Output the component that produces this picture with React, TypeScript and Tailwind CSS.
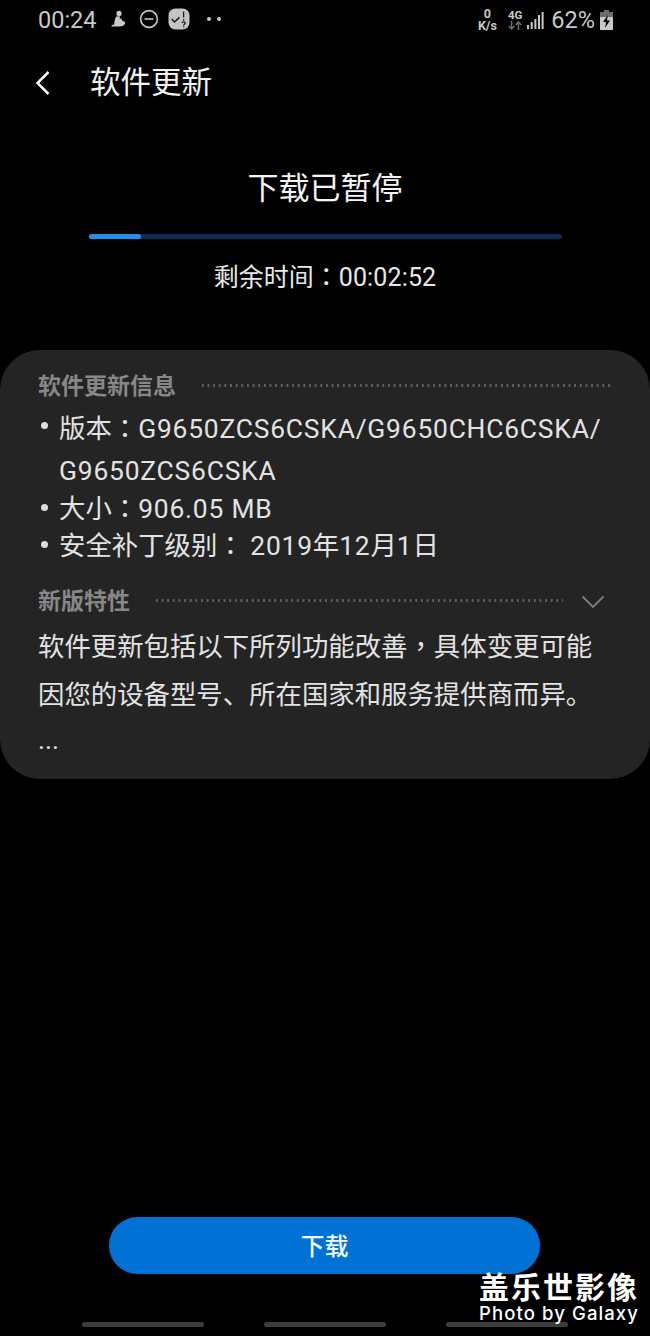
import React from 'react';

const fontStack = "font-['Roboto','Noto_Sans_CJK_SC',sans-serif]";

// Full-width colon and comma sit centred in their cell on this system font
const Mark: React.FC<{ children: React.ReactNode }> = ({ children }) => (
    <span className="font-['Noto_Sans_CJK_TC',sans-serif]">{children}</span>
);

// Latin runs in the info list are set a little wider than the CJK around them
const Latin: React.FC<{ children: React.ReactNode }> = ({ children }) => (
    <span className="tracking-[0.8px]">{children}</span>
);

const SectionTitle: React.FC<{ label: string; chevron?: boolean }> = ({ label, chevron }) => (
    <div className="flex items-center h-[30px]">
        <span className="text-[23px] leading-[30px] font-bold text-[#878787] whitespace-nowrap">{label}</span>
        <div className="ml-[24px] -mt-[3px] flex-1 h-[3px] bg-[radial-gradient(circle,#606060_1.1px,transparent_1.3px)] bg-[length:5.65px_3px]" />
        {chevron && (
            <svg className="ml-[18px] mr-[5px]" width="24" height="14" viewBox="0 0 24 14" fill="none" stroke="#7d7d7d" strokeWidth="1.9">
                <path d="M1.5 1.5 L12 12 L22.5 1.5" />
            </svg>
        )}
    </div>
);

const Bullet: React.FC<{ children: React.ReactNode; lineClass: string }> = ({ children, lineClass }) => (
    <div className={`flex text-[26.4px] text-[#e3e3e3] whitespace-nowrap ${lineClass}`}>
        <span className="w-[7px] h-[7px] rounded-full bg-[#dedede] mt-[16px] ml-[3px] mr-[11px] shrink-0" />
        <div>{children}</div>
    </div>
);

const StatusBar: React.FC = () => (
    <div className="flex items-center justify-between h-[40px] pl-[38px] pr-[37px] text-[#c9c9c9]">
        <div className="flex items-center">
            <span className="text-[23.5px] leading-[40px]">00:24</span>
            <svg className="ml-[13px] -mt-[3px]" width="18" height="18" viewBox="0 0 18 18" fill="#c9c9c9">
                <circle cx="9" cy="3.4" r="2.6" />
                <path d="M6.2 6.4 L10 6.2 L9.6 8.4 C11.4 8.6 12.4 9.6 12.6 11 L15.4 12 L15 13.2 C14.4 15.6 12.4 16.4 9.6 16.4 L1.6 16.4 L1.6 15.2 L4.4 14.2 C4 11.6 5 8.8 6.2 6.4 Z" />
            </svg>
            <svg className="ml-[11px] -mt-[3px]" width="20" height="20" viewBox="0 0 20 20" fill="none" stroke="#c9c9c9" strokeWidth="1.6">
                <circle cx="10" cy="10" r="8.4" />
                <path d="M5.6 10 H14.4" />
            </svg>
            <svg className="ml-[9px] -mt-[3px]" width="22" height="22" viewBox="0 0 22 22">
                <rect x="0.5" y="0.5" width="21" height="21" rx="7" fill="#c4c4c4" />
                <path d="M3.6 11 L6.6 14 L11.4 9.4" fill="none" stroke="#1c1c1c" strokeWidth="1.6" />
                <path d="M15.6 3.6 V9.4 M15.6 11 V12.4 M14 15 C14.4 13.6 17.2 13.6 17.2 15.2 C17.2 16.2 15.6 16.2 15.6 17.4 M15.6 18.2 V19.2" fill="none" stroke="#1c1c1c" strokeWidth="1.3" />
            </svg>
            <span className="ml-[17px] -mt-[3px] w-[4px] h-[4px] rounded-full bg-[#c9c9c9]" />
            <span className="ml-[6px] -mt-[3px] w-[4px] h-[4px] rounded-full bg-[#c9c9c9]" />
        </div>
        <div className="flex items-center">
            <div className="flex flex-col items-center text-[12.5px] leading-[12px] font-bold mr-[11px]">
                <span>0</span>
                <span>K/s</span>
            </div>
            <div className="flex flex-col items-center mr-[5px]">
                <span className="text-[11.5px] leading-[11px] font-bold">4G</span>
                <svg width="14" height="9" viewBox="0 0 14 9" fill="none" stroke="#6e6e6e" strokeWidth="1.5">
                    <path d="M3.6 0 V8 M0.8 5 L3.6 8 L6.4 5" />
                    <path d="M10.4 9 V1 M7.6 4 L10.4 1 L13.2 4" />
                </svg>
            </div>
            <svg width="17" height="19" viewBox="0 0 17 19" fill="#c9c9c9">
                <rect x="0" y="14" width="2" height="4" />
                <rect x="3.7" y="11" width="2" height="7" />
                <rect x="7.4" y="8" width="2" height="10" />
                <rect x="11" y="4" width="2" height="14" />
                <rect x="14.6" y="1" width="2" height="17" />
            </svg>
            <span className="text-[23.5px] leading-[40px] ml-[7px]">62%</span>
            <svg className="ml-[5px]" width="13" height="20" viewBox="0 0 13 20">
                <rect x="4" y="0" width="5" height="3" fill="#6e6e6e" />
                <rect x="0" y="2" width="13" height="5" fill="#6e6e6e" />
                <rect x="0" y="7" width="13" height="13" fill="#c9c9c9" />
                <path d="M8 5 L3 12 H6.2 L5 18 L10 10.4 H6.8 Z" fill="#000" />
            </svg>
        </div>
    </div>
);

export default function App() {
    return (
        <div className={`relative w-[650px] h-[1336px] overflow-hidden bg-black flex flex-col ${fontStack}`}>
            <StatusBar />

            <header className="flex items-center h-[44px] mt-[21px] pl-[21px]">
                <svg width="44" height="44" viewBox="0 0 24 24" fill="none" stroke="#ffffff" strokeWidth="1.35">
                    <path d="M15 6 L9 12 L15 18" />
                </svg>
                <h1 className="ml-[25px] text-[30.5px] leading-[44px] text-[#f2f2f2] whitespace-nowrap">软件更新</h1>
            </header>

            <section className="flex flex-col items-center mt-[61px]">
                <h2 className="text-[31px] leading-[46px] text-[#f5f5f5]">下载已暂停</h2>
                <div className="w-[473px] h-[5px] rounded-full bg-[#0e2c50] mt-[22px]">
                    <div className="w-[52px] h-full rounded-full bg-[#2090ee]" />
                </div>
                <p className="mt-[18px] text-[25px] leading-[36px] text-[#e8e8e8]">
                    剩余时间<Mark>：</Mark><span className="tracking-[0.15px]">00:02:52</span>
                </p>
            </section>

            <section className="mt-[54px] h-[429px] rounded-[40px] bg-[#242424] pl-[38px] pr-[40px] pt-[22px]">
                <SectionTitle label="软件更新信息" />
                <div className="mt-[4px]">
                    <Bullet lineClass="leading-[42px] h-[82px]">
                        版本<Mark>：</Mark><Latin>G9650ZCS6CSKA/G9650CHC6CSKA/</Latin>
                        <br />
                        <Latin>G9650ZCS6CSKA</Latin>
                    </Bullet>
                    <Bullet lineClass="leading-[37px] h-[37px]">
                        大小<Mark>：</Mark><Latin>906.05 MB</Latin>
                    </Bullet>
                    <Bullet lineClass="leading-[37px] h-[37px]">
                        安全补丁级别<Mark>：</Mark> <Latin>2019</Latin>年<Latin>12</Latin>月<Latin>1</Latin>日
                    </Bullet>
                </div>
                <div className="mt-[25px]">
                    <SectionTitle label="新版特性" chevron />
                </div>
                <p className="mt-[4px] text-[26.4px] leading-[48px] text-[#e3e3e3] whitespace-nowrap">
                    软件更新包括以下所列功能改善<Mark>，</Mark>具体变更可能
                    <br />
                    因您的设备型号、所在国家和服务提供商而异。
                    <span className="block -mt-[3px]">...</span>
                </p>
            </section>

            <div className="flex pl-[109px] mt-[438px]">
                <button className="w-[431px] h-[57px] pt-[3px] rounded-full bg-[#0072d6] text-[24px] font-medium text-[#f2f7fc]">
                    下载
                </button>
            </div>

            <nav className="flex pl-[82px] gap-[60px] mt-[48px]">
                <div className="w-[122px] h-[5px] rounded-full bg-[#3d3d3d]" />
                <div className="w-[122px] h-[5px] rounded-full bg-[#3d3d3d]" />
                <div className="w-[122px] h-[5px] rounded-full bg-[#3d3d3d]" />
            </nav>

            {/* Gallery watermark over the lower right corner */}
            <div className="absolute left-[479px] top-[1271px] text-white">
                <div className="text-[30px] leading-[34px] font-bold tracking-[2px] whitespace-nowrap">盖乐世影像</div>
                <div className="text-[18.5px] leading-[16px] font-['Inter',sans-serif] font-medium tracking-[1.1px] whitespace-nowrap">Photo by Galaxy</div>
            </div>
        </div>
    );
}
